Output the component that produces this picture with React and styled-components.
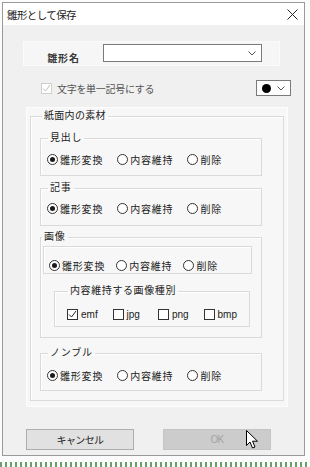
import React from 'react'
import styled, { createGlobalStyle } from 'styled-components'

const GlobalStyle = createGlobalStyle`
  html, body {
    margin: 0;
    padding: 0;
    background: #fbfbfb;
  }
  body {
    font-family: "Liberation Sans", "Noto Sans CJK JP", sans-serif;
    color: #222;
    width: 310px;
    height: 467px;
    overflow: hidden;
  }
`;

const Page = styled.div`
  position: relative;
  width: 310px;
  height: 467px;
  padding: 2px 0 0 2px;
  box-sizing: border-box;
  background: linear-gradient(#fbfbfb 0 0) no-repeat,
    repeating-linear-gradient(90deg, #6a9f6a 0 2px, transparent 2px 5px);
  background-size: 100% 462px, 100% 2px;
  background-position: 0 0, 0 463px;
`;

const Dialog = styled.div`
  width: 303px;
  height: 454px;
  box-sizing: border-box;
  border: 1px solid #9a9a9a;
  background: #f0f0f0;
  display: flex;
  flex-direction: column;
`;

const TitleBar = styled.div`
  height: 22px;
  background: #fff;
  display: flex;
  align-items: center;
  justify-content: space-between;
  padding: 0 4px 0 4px;
`;

const Title = styled.span`
  font-size: 10.5px;
  letter-spacing: -0.6px;
  color: #1a1a1a;
`;

const Body = styled.div`
  display: flex;
  flex-direction: column;
  padding: 16px 0 0 20px;
`;

const NamePanel = styled.div`
  width: 257px;
  height: 25px;
  box-sizing: border-box;
  background: #f6f6f6;
  border: 1px solid #fbfbfb;
  display: flex;
  align-items: flex-start;
  padding-top: 2px;
`;

const NameLabel = styled.span`
  width: 79px;
  text-align: center;
  font-size: 10px;
  font-weight: bold;
  letter-spacing: 0.8px;
  margin-top: 6px;
  color: #3a3a3a;
`;

const Combo = styled.div`
  width: ${({ $w }) => $w}px;
  height: ${({ $h }) => $h}px;
  box-sizing: border-box;
  background: #fff;
  border: 1px solid #7a7a7a;
  display: flex;
  align-items: center;
  justify-content: space-between;
  padding: 0 5px 0 5px;
`;

const OptionRow = styled.div`
  display: flex;
  align-items: center;
  margin-top: 14px;
  height: 16px;
  padding-left: 18px;
`;

const OptionLabel = styled.span`
  font-size: 10px;
  letter-spacing: -0.3px;
  color: #555;
  margin-left: 5px;
  flex: 1;
`;

const Dot = styled.span`
  width: 9px;
  height: 9px;
  border-radius: 50%;
  background: #000;
`;

const MaterialPanel = styled.div`
  width: 262px;
  height: 300px;
  box-sizing: border-box;
  margin: 11px 0 0 3px;
  background: #f7f7f7;
  border: 1px solid #fdfdfd;
  padding: 2px 4px 0 3px;
`;

const Group = styled.fieldset`
  margin: ${({ $m }) => $m || '0'};
  width: ${({ $w }) => $w}px;
  box-sizing: border-box;
  border: 1px solid #dadada;
  box-shadow: inset 1px 1px 0 #fff;
  padding: ${({ $p }) => $p};
  min-width: 0;
`;

const Legend = styled.legend`
  font-size: 10px;
  line-height: 12px;
  letter-spacing: ${({ $ls }) => $ls ?? 0.8}px;
  padding: 0 2px 0 2px;
  margin-left: ${({ $ml }) => $ml ?? 1}px;
  color: #222;
`;

const RadioRow = styled.div`
  display: flex;
  align-items: center;
  height: 14px;
  gap: ${({ $gap }) => $gap}px;
`;

const Choice = styled.label`
  display: flex;
  align-items: center;
  font-size: 10px;
  letter-spacing: 0.8px;
  color: #222;
`;

const Radio = styled.span`
  width: 11px;
  height: 11px;
  box-sizing: border-box;
  border-radius: 50%;
  border: 1px solid #333;
  background: #fff;
  margin-right: 2px;
  display: flex;
  align-items: center;
  justify-content: center;
  &::after {
    content: '';
    width: 5px;
    height: 5px;
    border-radius: 50%;
    background: ${({ $on }) => ($on ? '#1a1a1a' : 'transparent')};
  }
`;

const Box = styled.span`
  width: 11px;
  height: 11px;
  box-sizing: border-box;
  border: 1px solid ${({ $disabled }) => ($disabled ? '#cfcfcf' : '#333')};
  background: #fff;
  display: flex;
  align-items: center;
  justify-content: center;
`;

const CheckItem = styled.label`
  width: 47px;
  display: flex;
  align-items: center;
  gap: 3px;
  font-size: 10px;
  color: #222;
`;

const PlainBox = styled.div`
  margin: 3px 0 0 2px;
  width: 209px;
  height: 28px;
  box-sizing: border-box;
  border: 1px solid #dadada;
  box-shadow: inset 1px 1px 0 #fff;
  padding: 11px 0 0 5px;
`;

const ButtonRow = styled.div`
  display: flex;
  gap: 29px;
  margin: 22px 0 0 3px;
`;

const Button = styled.div`
  position: relative;
  width: ${({ $w }) => $w}px;
  height: 21px;
  box-sizing: border-box;
  border: 1px solid ${({ $disabled }) => ($disabled ? '#c4c4c4' : '#adadad')};
  background: ${({ $disabled }) => ($disabled ? '#cccccc' : '#e1e1e1')};
  color: ${({ $disabled }) => ($disabled ? '#a3a3a3' : '#222')};
  display: flex;
  align-items: center;
  justify-content: center;
  font-size: 10px;
  letter-spacing: -0.6px;
`;

const Cursor = styled.svg`
  position: absolute;
  left: 82px;
  top: 0px;
`;

const Chevron = () => (
  <svg width="8" height="5" viewBox="0 0 8 5">
    <path d="M0.5 0.5 L4 4 L7.5 0.5" fill="none" stroke="#555" strokeWidth="1" />
  </svg>
)

const Tick = ({ color }) => (
  <svg width="9" height="9" viewBox="0 0 9 9">
    <path d="M1 4.5 L3.5 7 L8 1" fill="none" stroke={color} strokeWidth="1" />
  </svg>
)

const Radios = ({ gap }) => (
  <RadioRow $gap={gap}>
    <Choice><Radio $on />雛形変換</Choice>
    <Choice><Radio />内容維持</Choice>
    <Choice><Radio />削除</Choice>
  </RadioRow>
)

const App = () => {
  return (
    <Page>
      <GlobalStyle />
      <Dialog>
        <TitleBar>
          <Title>雛形として保存</Title>
          <svg width="11" height="11" viewBox="0 0 11 11" style={{ marginRight: 2 }}>
            <path d="M0.5 0.5 L10.5 10.5 M10.5 0.5 L0.5 10.5" stroke="#222" strokeWidth="1" />
          </svg>
        </TitleBar>

        <Body>
          <NamePanel>
            <NameLabel>雛形名</NameLabel>
            <Combo $w={159} $h={18}>
              <span />
              <Chevron />
            </Combo>
          </NamePanel>

          <OptionRow>
            <Box $disabled><Tick color="#bdbdbd" /></Box>
            <OptionLabel>文字を単一記号にする</OptionLabel>
            <Combo $w={35} $h={16} style={{ marginRight: 13 }}>
              <Dot />
              <Chevron />
            </Combo>
          </OptionRow>

          {/* 紙面内の素材 */}
          <MaterialPanel>
            <Group $w={254} $p="10px 0 9px 9px">
              <Legend $ml={2} $ls={0.3}>紙面内の素材</Legend>

              <Group $w={222} $p="8px 0 9px 6px">
                <Legend>見出し</Legend>
                <Radios gap={14} />
              </Group>

              <Group $w={222} $p="7px 0 10px 6px" $m="6px 0 0 0">
                <Legend>記事</Legend>
                <Radios gap={14} />
              </Group>

              <Group $w={222} $p="0 0 10px 0" $m="5px 0 0 0">
                <Legend>画像</Legend>
                <PlainBox>
                  <Radios gap={11} />
                </PlainBox>
                <Group $w={196} $p="10px 0 5px 12px" $m="11px 0 0 13px">
                  <Legend $ls={0.6}>内容維持する画像種別</Legend>
                  <RadioRow $gap={0}>
                    <CheckItem><Box><Tick color="#222" /></Box>emf</CheckItem>
                    <CheckItem><Box />jpg</CheckItem>
                    <CheckItem><Box />png</CheckItem>
                    <CheckItem><Box />bmp</CheckItem>
                  </RadioRow>
                </Group>
              </Group>

              <Group $w={222} $p="9px 0 8px 6px" $m="9px 0 0 0">
                <Legend>ノンブル</Legend>
                <Radios gap={14} />
              </Group>
            </Group>
          </MaterialPanel>

          <ButtonRow>
            <Button $w={108}>キャンセル</Button>
            <Button $w={108} $disabled>
              OK
              <Cursor width="13" height="20" viewBox="0 0 13 20">
                <path d="M0.5 0.5 L0.5 15.5 L4 12 L6.5 18 L9 17 L6.5 11.2 L11.5 11.2 Z" fill="#fff" stroke="#000" strokeWidth="1" strokeLinejoin="round" />
              </Cursor>
            </Button>
          </ButtonRow>
        </Body>
      </Dialog>
    </Page>
  );
}

export default App
